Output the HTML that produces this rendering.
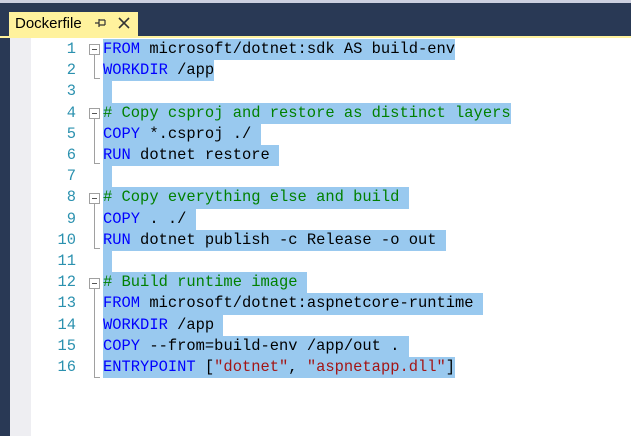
<!DOCTYPE html>
<html><head><meta charset="utf-8"><style>
body{margin:0;width:631px;height:436px;overflow:hidden;background:#fff;position:relative;font-family:"Liberation Sans",sans-serif}
.a{position:absolute}
.w{position:absolute;left:0;top:1px;width:631px;height:435px}
.ln{position:absolute;left:40px;width:36px;text-align:right;color:#2B91AF;font:15.4px "Liberation Mono",monospace;line-height:21.2px}
.cd{position:absolute;left:103px;font:15.45px "Liberation Mono",monospace;line-height:21.2px;white-space:pre;background:#99C9EF;color:#000;height:21.2px}
.k{color:#0000FF}.c{color:#008000}.s{color:#A31515}
.fb{position:absolute;left:89px;width:9px;height:9px;border:1px solid #a0a0a0;background:#fff}
.fb:after{content:"";position:absolute;left:2px;top:4px;width:5px;height:1px;background:#555}
.fv{position:absolute;left:94px;width:1px;background:#a0a0a0}
.ft{position:absolute;left:94px;width:6px;height:1px;background:#a0a0a0}
</style></head><body>
<div class="a" style="left:0;top:0;width:631px;height:3px;background:#CCD0E0"></div>
<div class="a" style="left:0;top:3px;width:631px;height:33px;background:#293955"></div>
<div class="a" style="left:0;top:36px;width:631px;height:2px;background:#FFF29D"></div>
<div class="a" style="left:9px;top:12px;width:129px;height:26px;background:#FFF29D"></div>
<div class="a" style="left:15px;top:15px;font-size:15px;color:#000">Dockerfile</div>
<svg class="a" style="left:95px;top:18px" width="12" height="10"><path d="M0 5H4M4 1V9M4 2H10M4 7H10M10 2V7" stroke="#333" stroke-width="1.2" fill="none"/></svg>
<svg class="a" style="left:118px;top:17px" width="12" height="12"><path d="M1 1L11 11M11 1L1 11" stroke="#333" stroke-width="1.6"/></svg>
<div class="a" style="left:0;top:38px;width:10px;height:398px;background:#293955"></div>
<div class="a" style="left:10px;top:38px;width:21px;height:398px;background:#EEEEF2"></div>
<div class="w">
<div class="ln" style="top:38px">1</div><div class="cd" style="top:38px"><span class="k">FROM</span> microsoft/dotnet:sdk AS build-env</div>
<div class="ln" style="top:59.2px">2</div><div class="cd" style="top:59.2px"><span class="k">WORKDIR</span> /app</div>
<div class="ln" style="top:80.4px">3</div><div class="cd" style="top:80.4px"> </div>
<div class="ln" style="top:101.6px">4</div><div class="cd" style="top:101.6px"><span class="c"># Copy csproj and restore as distinct layers</span></div>
<div class="ln" style="top:122.8px">5</div><div class="cd" style="top:122.8px"><span class="k">COPY</span> *.csproj ./ </div>
<div class="ln" style="top:144px">6</div><div class="cd" style="top:144px"><span class="k">RUN</span> dotnet restore </div>
<div class="ln" style="top:165.2px">7</div><div class="cd" style="top:165.2px"> </div>
<div class="ln" style="top:186.4px">8</div><div class="cd" style="top:186.4px"><span class="c"># Copy everything else and build </span></div>
<div class="ln" style="top:207.6px">9</div><div class="cd" style="top:207.6px"><span class="k">COPY</span> . ./ </div>
<div class="ln" style="top:228.8px">10</div><div class="cd" style="top:228.8px"><span class="k">RUN</span> dotnet publish -c Release -o out </div>
<div class="ln" style="top:250px">11</div><div class="cd" style="top:250px"> </div>
<div class="ln" style="top:271.2px">12</div><div class="cd" style="top:271.2px"><span class="c"># Build runtime image </span></div>
<div class="ln" style="top:292.4px">13</div><div class="cd" style="top:292.4px"><span class="k">FROM</span> microsoft/dotnet:aspnetcore-runtime </div>
<div class="ln" style="top:313.6px">14</div><div class="cd" style="top:313.6px"><span class="k">WORKDIR</span> /app </div>
<div class="ln" style="top:334.8px">15</div><div class="cd" style="top:334.8px"><span class="k">COPY</span> --from=build-env /app/out . </div>
<div class="ln" style="top:356px">16</div><div class="cd" style="top:356px"><span class="k">ENTRYPOINT</span> [<span class="s">"dotnet"</span>, <span class="s">"aspnetapp.dll"</span>]</div>

<div class="fb" style="top:43px"></div><div class="fv" style="top:54px;height:23px"></div><div class="ft" style="top:77px"></div>
<div class="fb" style="top:107px"></div><div class="fv" style="top:118px;height:44px"></div><div class="ft" style="top:162px"></div>
<div class="fb" style="top:192px"></div><div class="fv" style="top:203px;height:44px"></div><div class="ft" style="top:247px"></div>
<div class="fb" style="top:277px"></div><div class="fv" style="top:288px;height:88px"></div><div class="ft" style="top:376px"></div>
</div>
</body></html>
